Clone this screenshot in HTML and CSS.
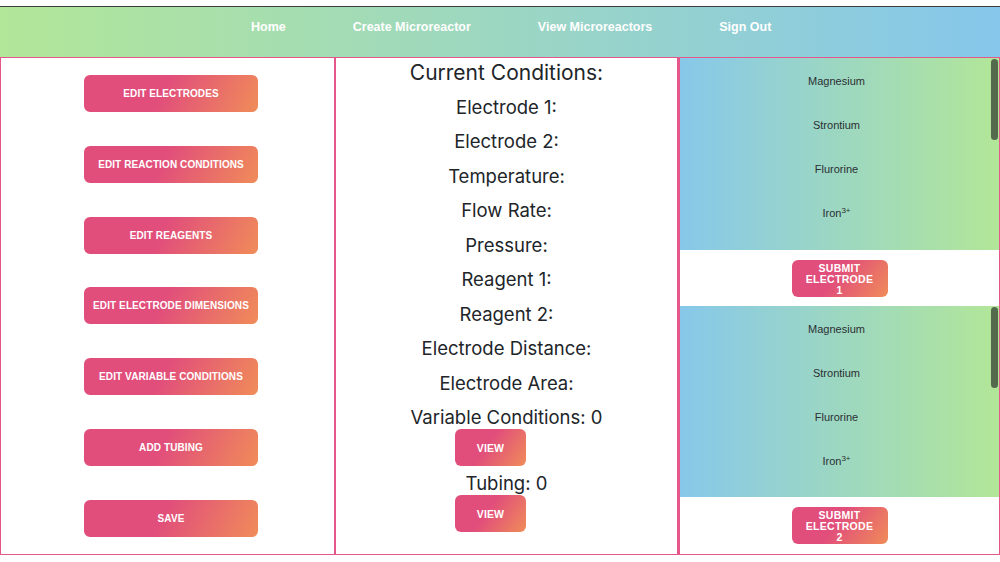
FILE: index.html
```html
<!DOCTYPE html>
<html>
<head>
<meta charset="utf-8">
<link rel="stylesheet" href="styles.css">
</head>
<body>
<div class="topline"></div>
<nav class="nav">
  <a class="nav-link">Home</a>
  <a class="nav-link">Create Microreactor</a>
  <a class="nav-link">View Microreactors</a>
  <a class="nav-link">Sign Out</a>
</nav>
<main class="panels">
  <section class="panel panel-left">
    <button class="btn btn-wide">EDIT ELECTRODES</button>
    <button class="btn btn-wide">EDIT REACTION CONDITIONS</button>
    <button class="btn btn-wide">EDIT REAGENTS</button>
    <button class="btn btn-wide">EDIT ELECTRODE DIMENSIONS</button>
    <button class="btn btn-wide">EDIT VARIABLE CONDITIONS</button>
    <button class="btn btn-wide">ADD TUBING</button>
    <button class="btn btn-wide">SAVE</button>
  </section>
  <section class="panel panel-mid">
    <div class="conds">
      <div class="cond cond-title">Current Conditions:</div>
      <div class="cond">Electrode 1:</div>
      <div class="cond">Electrode 2:</div>
      <div class="cond">Temperature:</div>
      <div class="cond">Flow Rate:</div>
      <div class="cond">Pressure:</div>
      <div class="cond">Reagent 1:</div>
      <div class="cond">Reagent 2:</div>
      <div class="cond">Electrode Distance:</div>
      <div class="cond">Electrode Area:</div>
      <div class="cond">Variable Conditions: 0</div>
      <button class="btn btn-view">VIEW</button>
      <div class="cond">Tubing: 0</div>
      <button class="btn btn-view">VIEW</button>
    </div>
  </section>
  <section class="panel panel-right">
    <div class="elist">
      <div class="elist-item">Magnesium</div>
      <div class="elist-item">Strontium</div>
      <div class="elist-item">Flurorine</div>
      <div class="elist-item">Iron<sup>3+</sup></div>
      <div class="thumb"></div>
    </div>
    <div class="submit-row">
      <button class="btn btn-submit">SUBMIT ELECTRODE 1</button>
    </div>
    <div class="elist">
      <div class="elist-item">Magnesium</div>
      <div class="elist-item">Strontium</div>
      <div class="elist-item">Flurorine</div>
      <div class="elist-item">Iron<sup>3+</sup></div>
      <div class="thumb"></div>
    </div>
    <div class="submit-row">
      <button class="btn btn-submit">SUBMIT ELECTRODE 2</button>
    </div>
  </section>
</main>
</body>
</html>
```
FILE: styles.css
```css
* { box-sizing: border-box; }
html, body { margin: 0; padding: 0; background: #fff; }
body { font-family: Inter, "Liberation Sans", sans-serif; color: #212529; }

.topline { height: 7px; border-bottom: 1px solid #3c3c3c; }

.nav {
  height: 50px;
  display: flex;
  align-items: center;
  gap: 67px;
  padding-left: 251px;
  padding-bottom: 11px;
  background: linear-gradient(to right, #b2e698, #86c7eb);
}
.nav-link {
  color: #fff;
  font-family: "Liberation Sans", Arial, sans-serif;
  font-weight: bold;
  font-size: 12.5px;
}

.panels {
  display: flex;
  height: 498px;
  border-top: 1px solid #e5578a;
}
.panel {
  border: 1px solid #e5578a;
  border-top: none;
  height: 497px;
}
.panel-left {
  width: 335px;
  display: flex;
  flex-direction: column;
  align-items: flex-start;
  padding: 17px 0 0 83px;
  gap: 33.8px;
}
.panel-mid {
  width: 343px;
  display: flex;
  justify-content: center;
}
.panel-right {
  width: 322px;
  border-left-width: 2px;
  display: flex;
  flex-direction: column;
}

.btn {
  border: none;
  border-radius: 6px;
  color: #fff;
  font-family: "Liberation Sans", Arial, sans-serif;
  font-weight: bold;
  font-size: 10px;
  letter-spacing: 0.1px;
  background: linear-gradient(115deg, #e14e7b 45%, #f08c59 100%);
  padding: 0;
  height: 37px;
  cursor: pointer;
}
.btn-wide { width: 174px; }

.conds {
  display: flex;
  flex-direction: column;
  align-items: center;
  margin-top: -1.75px;
}
.cond {
  font-size: 18.5px;
  line-height: 34.5px;
  white-space: nowrap;
}
.cond-title { font-size: 21px; line-height: 33.5px; }
.btn-view {
  width: 71px;
  margin: -5.5px 32px 0 0;
  font-size: 10.5px;
  background: linear-gradient(125deg, #e14e7b 45%, #f08c59 100%);
}

.elist {
  position: relative;
  height: 192px;
  overflow: hidden;
  padding-top: 1px;
  background: linear-gradient(to right, #87c8ea, #b2e698);
}
.elist + .submit-row + .elist { height: 191px; }
.elist-item {
  height: 44px;
  line-height: 44px;
  text-align: center;
  padding-right: 6px;
  font-family: "Liberation Sans", Arial, sans-serif;
  font-size: 11px;
  color: #2b2f33;
}
.elist-item sup { font-size: 8px; line-height: 0; vertical-align: 4px; }
.thumb {
  position: absolute;
  top: 1px;
  right: 1px;
  width: 7px;
  height: 81px;
  border-radius: 4px;
  background: #546a4c;
}
.submit-row {
  height: 56px;
  display: flex;
  align-items: center;
  justify-content: center;
  background: #fff;
}
.btn-submit {
  width: 96px;
  line-height: 11px;
  padding: 3px 11px 0;
  font-size: 10.5px;
  letter-spacing: 0.3px;
  background: linear-gradient(125deg, #e14e7b 45%, #f08c59 100%);
}
```
